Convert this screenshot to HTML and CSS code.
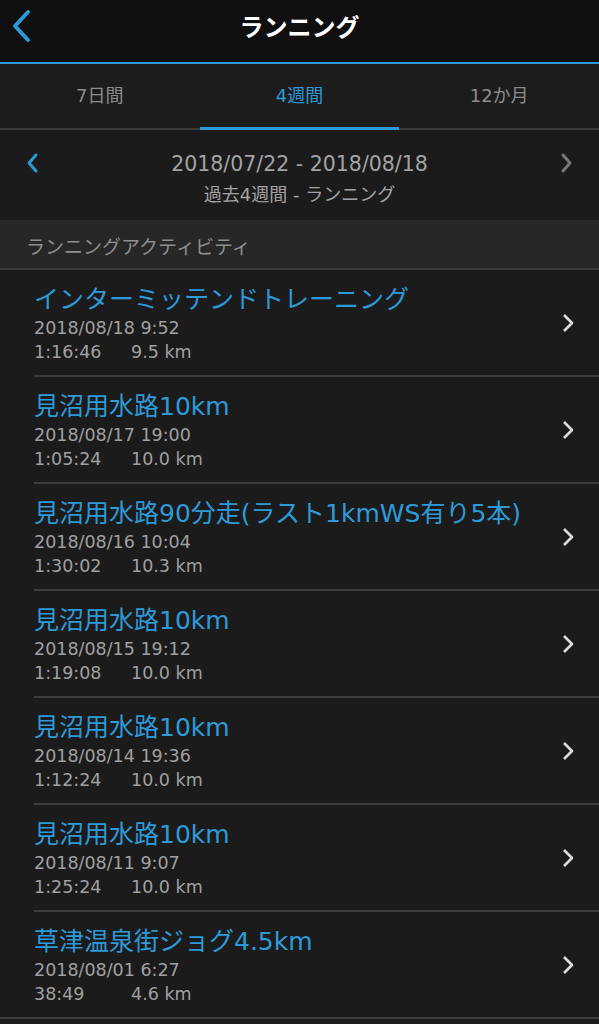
FILE: index.html
```html
<!DOCTYPE html>
<html lang="ja">
<head>
    <meta charset="UTF-8">
    <meta name="viewport" content="width=device-width, initial-scale=1.0">
    <title>ランニング</title>
    <link rel="stylesheet" href="styles.css">
</head>
<body>
    <header class="top-bar">
        <svg class="back" width="22" height="34" viewBox="0 0 22 34"><path d="M18 3 L5 17 L18 31" fill="none" stroke="#2d9ad8" stroke-width="4" stroke-linecap="round" stroke-linejoin="round"/></svg>
        <h1>ランニング</h1>
    </header>

    <nav class="tabs">
        <div class="tab">7日間</div>
        <div class="tab active">4週間</div>
        <div class="tab">12か月</div>
    </nav>

    <div class="range">
        <svg class="arrow" width="14" height="22" viewBox="0 0 14 22"><path d="M10 3 L3 11 L10 19" fill="none" stroke="#2d9ad8" stroke-width="3" stroke-linecap="round" stroke-linejoin="round"/></svg>
        <div class="range-text">
            <div class="dates">2018/07/22 - 2018/08/18</div>
            <div class="sub">過去4週間 - ランニング</div>
        </div>
        <svg class="arrow" width="14" height="22" viewBox="0 0 14 22"><path d="M4 3 L11 11 L4 19" fill="none" stroke="#777" stroke-width="3" stroke-linecap="round" stroke-linejoin="round"/></svg>
    </div>

    <div class="section">ランニングアクティビティ</div>

    <ul class="list">
        <li class="item">
            <div class="info">
                <div class="name">インターミッテンドトレーニング</div>
                <div class="meta">2018/08/18 9:52</div>
                <div class="meta"><span class="dur">1:16:46</span>9.5 km</div>
            </div>
            <svg class="chev" width="14" height="22" viewBox="0 0 14 22"><path d="M3 3 L11 11 L3 19" fill="none" stroke="#ddd" stroke-width="2.6" stroke-linejoin="round"/></svg>
        </li>
        <li class="item">
            <div class="info">
                <div class="name">見沼用水路10km</div>
                <div class="meta">2018/08/17 19:00</div>
                <div class="meta"><span class="dur">1:05:24</span>10.0 km</div>
            </div>
            <svg class="chev" width="14" height="22" viewBox="0 0 14 22"><path d="M3 3 L11 11 L3 19" fill="none" stroke="#ddd" stroke-width="2.6" stroke-linejoin="round"/></svg>
        </li>
        <li class="item">
            <div class="info">
                <div class="name">見沼用水路90分走(ラスト1kmWS有り5本)</div>
                <div class="meta">2018/08/16 10:04</div>
                <div class="meta"><span class="dur">1:30:02</span>10.3 km</div>
            </div>
            <svg class="chev" width="14" height="22" viewBox="0 0 14 22"><path d="M3 3 L11 11 L3 19" fill="none" stroke="#ddd" stroke-width="2.6" stroke-linejoin="round"/></svg>
        </li>
        <li class="item">
            <div class="info">
                <div class="name">見沼用水路10km</div>
                <div class="meta">2018/08/15 19:12</div>
                <div class="meta"><span class="dur">1:19:08</span>10.0 km</div>
            </div>
            <svg class="chev" width="14" height="22" viewBox="0 0 14 22"><path d="M3 3 L11 11 L3 19" fill="none" stroke="#ddd" stroke-width="2.6" stroke-linejoin="round"/></svg>
        </li>
        <li class="item">
            <div class="info">
                <div class="name">見沼用水路10km</div>
                <div class="meta">2018/08/14 19:36</div>
                <div class="meta"><span class="dur">1:12:24</span>10.0 km</div>
            </div>
            <svg class="chev" width="14" height="22" viewBox="0 0 14 22"><path d="M3 3 L11 11 L3 19" fill="none" stroke="#ddd" stroke-width="2.6" stroke-linejoin="round"/></svg>
        </li>
        <li class="item">
            <div class="info">
                <div class="name">見沼用水路10km</div>
                <div class="meta">2018/08/11 9:07</div>
                <div class="meta"><span class="dur">1:25:24</span>10.0 km</div>
            </div>
            <svg class="chev" width="14" height="22" viewBox="0 0 14 22"><path d="M3 3 L11 11 L3 19" fill="none" stroke="#ddd" stroke-width="2.6" stroke-linejoin="round"/></svg>
        </li>
        <li class="item last">
            <div class="info">
                <div class="name">草津温泉街ジョグ4.5km</div>
                <div class="meta">2018/08/01 6:27</div>
                <div class="meta"><span class="dur">38:49</span>4.6 km</div>
            </div>
            <svg class="chev" width="14" height="22" viewBox="0 0 14 22"><path d="M3 3 L11 11 L3 19" fill="none" stroke="#ddd" stroke-width="2.6" stroke-linejoin="round"/></svg>
        </li>
    </ul>
</body>
</html>
```

FILE: styles.css
```css
body {
    margin: 0;
    background-color: #1b1b1b;
    color: #a8a8a8;
    font-family: "DejaVu Sans", "Noto Sans CJK JP", sans-serif;
    width: 599px;
    height: 1024px;
    overflow: hidden;
}
.top-bar {
    height: 62px;
    background-color: #0f0f0f;
    border-bottom: 2px solid #2d9ad8;
    display: flex;
    align-items: center;
    justify-content: center;
    position: relative;
}
.top-bar h1 {
    margin: 0;
    color: #fff;
    font-size: 24px;
    font-weight: bold;
    margin-top: -11px;
}
.back {
    position: absolute; /* sits over the bar, left of the centred title */
    left: 10px;
    top: 9px;
}
.tabs {
    display: grid;
    grid-template-columns: 1fr 1fr 1fr;
    height: 64px;
    background-color: #1c1c1c;
    border-bottom: 2px solid #3a3a3a;
}
.tab {
    display: flex;
    align-items: center;
    justify-content: center;
    font-size: 18px;
    color: #8c8c8c;
    padding-bottom: 4px;
    border-bottom: 3px solid transparent;
    margin-bottom: -2px;
}
.tab.active {
    color: #2d9ad8;
    border-bottom-color: #2d9ad8;
}
.range {
    height: 90px;
    display: flex;
    align-items: flex-start;
    justify-content: space-between;
    padding: 0 26px;
    background-color: #1b1b1b;
}
.range .arrow {
    margin-top: 22px;
}
.range-text {
    text-align: center;
    padding-top: 20px;
}
.dates {
    font-size: 20.5px;
    color: #a3a3a3;
    line-height: 28px;
}
.sub {
    font-size: 18px;
    color: #a3a3a3;
    margin-top: 5px;
    line-height: 24px;
}
.section {
    height: 50px;
    box-sizing: border-box;
    padding-top: 3px;
    background-color: #272727;
    border-bottom: 2px solid #3a3a3a;
    display: flex;
    align-items: center;
    padding-left: 26px;
    font-size: 19px;
    color: #8e8e8e;
}
.list {
    list-style: none;
    margin: 0;
    padding: 0;
}
.item {
    height: 105px;
    margin-left: 34px;
    border-bottom: 2px solid #3c3c3c;
    display: flex;
    align-items: center;
    justify-content: space-between;
    padding-right: 24px;
}
.item.last {
    margin-left: 0;
    padding-left: 34px;
}
.info {
    padding-top: 4px;
}
.name {
    color: #2d9ad8;
    font-size: 25px;
    line-height: 30px;
    margin-bottom: 1px;
}
.meta {
    font-size: 17.5px;
    line-height: 24px;
    color: #a0a0a0;
}
.dur {
    display: inline-block;
    width: 97px;
}
```
